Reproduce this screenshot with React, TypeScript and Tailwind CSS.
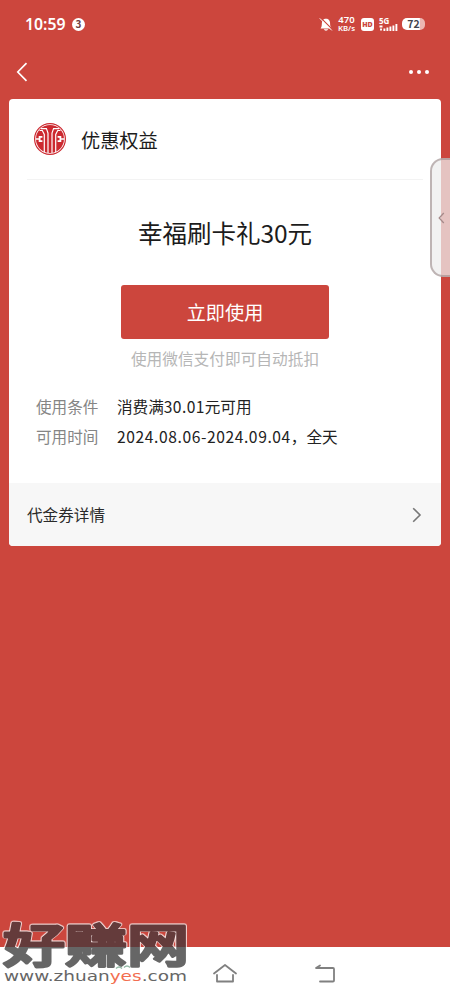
import React from "react";

function StatusBar() {
  return (
    <header className="flex h-12 shrink-0 items-center justify-between pl-[25px] pr-[25px] text-white">
      <div className="flex items-center gap-[6px]">
        <span className="w-[41px] whitespace-nowrap font-['Noto_Sans','Noto_Sans_CJK_SC',sans-serif] text-[15.8px] leading-5 font-semibold">10:59</span>
        <span className="flex size-[13px] items-center justify-center rounded-full bg-white text-[10px] leading-none font-bold text-[#6d4040]">3</span>
      </div>
      <div className="flex items-center">
        <svg className="mr-[4px] h-[15px] w-[14px]" viewBox="0 0 14 15">
          <path d="M1.6 11.4C3.6 9 2.2 5.5 3.7 3.4 4.5 2.2 5.7 1.8 7 1.8c3.4 0 4.1 2.7 4.1 4.9 0 2 .4 3.4 1.7 4.7Z" fill="#fff" />
          <path d="M4.8 12.2h4.4c-.6 1.9-3.8 1.9-4.4 0Z" fill="#fff" />
          <path d="m1.8 .8 11.9 12" stroke="#cc463d" strokeWidth="1.2" />
          <path d="m.8 1.4 12 12" stroke="#fff" strokeWidth="1" />
        </svg>
        <div className="mr-[5px] flex w-[19px] flex-col items-center font-['Noto_Sans',sans-serif] font-semibold">
          <span className="text-[9.5px] leading-[8px]">470</span>
          <span className="text-[7.8px] leading-[8px] whitespace-nowrap">KB/s</span>
        </div>
        <span className="mr-[5px] flex h-[13px] w-[13px] items-center justify-center rounded-[3px] bg-white font-['Noto_Sans',sans-serif] text-[7px] leading-none font-black text-[#cc463d]">HD</span>
        <div className="relative mr-[4px] h-[15px] w-[19px]">
          <span className="absolute -top-[1px] left-0 font-['Noto_Sans',sans-serif] text-[8px] leading-[9px] font-bold">5G</span>
          <svg className="size-full" viewBox="0 0 19 15">
            <path d="M.5 9.5h3M2 11.5v2M5.4 11.5v2.5M8.4 10.5V14M11.4 9.5V14M14.4 8.5V14M17.4 7V14" stroke="#fff" strokeWidth="1.9" />
          </svg>
        </div>
        <span className="flex h-[12px] w-[23px] items-center justify-center rounded-[5px] bg-linear-to-r from-white from-75% to-[#edb6b1] to-80% text-[10.5px] leading-none font-bold text-[#44444e]">72</span>
      </div>
    </header>
  );
}

function BankLogo() {
  return (
    <svg className="size-[34px]" viewBox="0 0 34 34">
      <circle cx="17" cy="17" r="15.4" fill="#fff" stroke="#cc2930" strokeWidth="1.2" />
      <circle cx="17" cy="17" r="14" fill="#cc2930" />
      <g fill="none" stroke="#fff" strokeWidth="1.2">
        <path d="M8 6.6h5.4l1.6 4.4V31M26 6.6h-5.4L19 11v20" />
        <path d="M6.5 8.5h2.8l2 4V30M27.5 8.5h-2.8l-2 4V30" />
      </g>
      <g fill="none" stroke="#fff" strokeWidth="1.8">
        <path d="M9.4 14.8H6.6v4.4h2.8M24.6 14.8h2.8v4.4h-2.8" />
        <path d="M3 17h3.6M27.4 17H31" strokeWidth="1.4" />
      </g>
    </svg>
  );
}

function DetailRow({ label, children }: { label: string; children: React.ReactNode }) {
  return (
    <div className="flex h-[30px] items-center whitespace-nowrap">
      <dt className="w-[81px] text-[15.6px] text-[#858585]">{label}</dt>
      <dd className="text-[15.6px] text-[#222]">{children}</dd>
    </div>
  );
}

function CouponCard() {
  return (
    <main className="mx-[9px] flex h-[447px] flex-col overflow-hidden rounded-[4px] bg-white">
      <div className="mx-[18px] flex h-[81px] shrink-0 items-center border-b border-[#f3f3f3] pl-[6px]">
        <BankLogo />
        <h2 className="mt-[2px] ml-[14px] text-[19.2px] leading-7 text-[#1c1c1c]">优惠权益</h2>
      </div>
      <h1 className="mt-[35px] text-center text-[24.5px] leading-9 text-[#1c1c1c]">幸福刷卡礼30元</h1>
      <button className="mx-auto mt-[34px] h-[54px] w-[208px] shrink-0 rounded-[3px] bg-[#cc463d] text-[19.2px] text-white">立即使用</button>
      <p className="mt-[8px] text-center text-[15.7px] leading-6 text-[#b6b6b6]">使用微信支付即可自动抵扣</p>
      <dl className="mt-[21px] ml-[27px]">
        <DetailRow label="使用条件">消费满<span className="tracking-[0.4px]">30.01</span>元可用</DetailRow>
        <DetailRow label="可用时间"><span className="tracking-[0.6px]">2024.08.06-2024.09.04</span>，全天</DetailRow>
      </dl>
      <div className="mt-auto flex h-[63px] items-center justify-between bg-[#f7f7f7] pr-[19px] pl-[18px] text-[15.6px] text-[#2a2a2a]">
        <span>代金券详情</span>
        <svg className="h-[16px] w-[10px]" viewBox="0 0 10 16"><path d="m1.2 1.2 6.8 6.8-6.8 6.8" fill="none" stroke="#777" strokeWidth="1.6" /></svg>
      </div>
    </main>
  );
}

function Watermark() {
  return (
    <div className="absolute bottom-0 left-0 h-[84px] w-[200px]">
      <svg className="size-full" viewBox="0 0 200 84">
        <defs>
          <linearGradient id="ink" gradientUnits="userSpaceOnUse" x1="0" y1="0" x2="0" y2="84">
            <stop offset=".375" stopColor="#643b3b" />
            <stop offset=".375" stopColor="#666" />
          </linearGradient>
        </defs>
        <text
          className="[filter:drop-shadow(1px_0_0_#ffffffa0)_drop-shadow(-1px_0_0_#ffffffa0)_drop-shadow(0_-1px_0_#ffffffa0)]"
          x="3" y="45.5" textLength="186" lengthAdjust="spacingAndGlyphs"
          fontFamily="Noto Sans CJK SC, sans-serif" fontWeight="500" fontSize="46"
          strokeLinejoin="round" fill="url(#ink)" stroke="url(#ink)" strokeWidth="2.8"
        >好赚网</text>
        <text x="4" y="65" textLength="183" lengthAdjust="spacingAndGlyphs" fontFamily="DejaVu Sans, sans-serif" fontSize="13.5" fill="#666">www.zhuan<tspan fill="#f26e50">yes</tspan>.com</text>
        <path d="M116 52.5q3-3 6 0M124 51.5q3-3 6 0" fill="none" stroke="#93b9a5" strokeWidth="1.4" />
      </svg>
    </div>
  );
}

export default function App() {
  return (
    <div className="relative flex h-[1000px] w-[450px] flex-col overflow-hidden bg-[#cc463d] font-['Noto_Sans_CJK_SC',sans-serif]">
      <StatusBar />
      <nav className="flex h-[51px] shrink-0 items-center justify-between pr-[21px] pl-[16px]">
        <svg className="mb-[3px] h-[20px] w-[12px]" viewBox="0 0 12 20"><path d="M10.5 1.2 1.8 10l8.7 8.8" fill="none" stroke="#fff" strokeWidth="1.7" /></svg>
        <div className="mb-[3px] flex gap-[4px]">
          <span className="size-[4px] rounded-full bg-white" />
          <span className="size-[4px] rounded-full bg-white" />
          <span className="size-[4px] rounded-full bg-white" />
        </div>
      </nav>
      <CouponCard />
      <div className="absolute top-[158px] right-0 flex h-[119px] w-[20px] items-center justify-center rounded-l-[13px] border-2 border-r-0 border-[#9b8b8b]/60 bg-[#eee]/75">
        <svg className="h-[12px] w-[7px]" viewBox="0 0 7 12"><path d="M5.8 1 1.2 6l4.6 5" fill="none" stroke="#a58a8a" strokeWidth="1.3" /></svg>
      </div>
      <footer className="mt-auto flex h-[53px] items-center bg-white pl-[212px]">
        <svg className="mb-[2px] h-[20px] w-[26px]" viewBox="0 0 26 20" fill="none" stroke="#808080" strokeWidth="1.8" strokeLinecap="round" strokeLinejoin="round">
          <path d="M2 10.5 13 2l11 8.5M5 12v6.5h16V12" />
        </svg>
        <svg className="mb-[2px] ml-[76px] h-[20px] w-[22px]" viewBox="0 0 22 20" fill="none" stroke="#808080" strokeWidth="1.8" strokeLinecap="round" strokeLinejoin="round">
          <path d="M6 2.5 2 5h17q1 0 1 1v11.5q0 1-1 1H6" />
        </svg>
      </footer>
      <Watermark />
    </div>
  );
}
